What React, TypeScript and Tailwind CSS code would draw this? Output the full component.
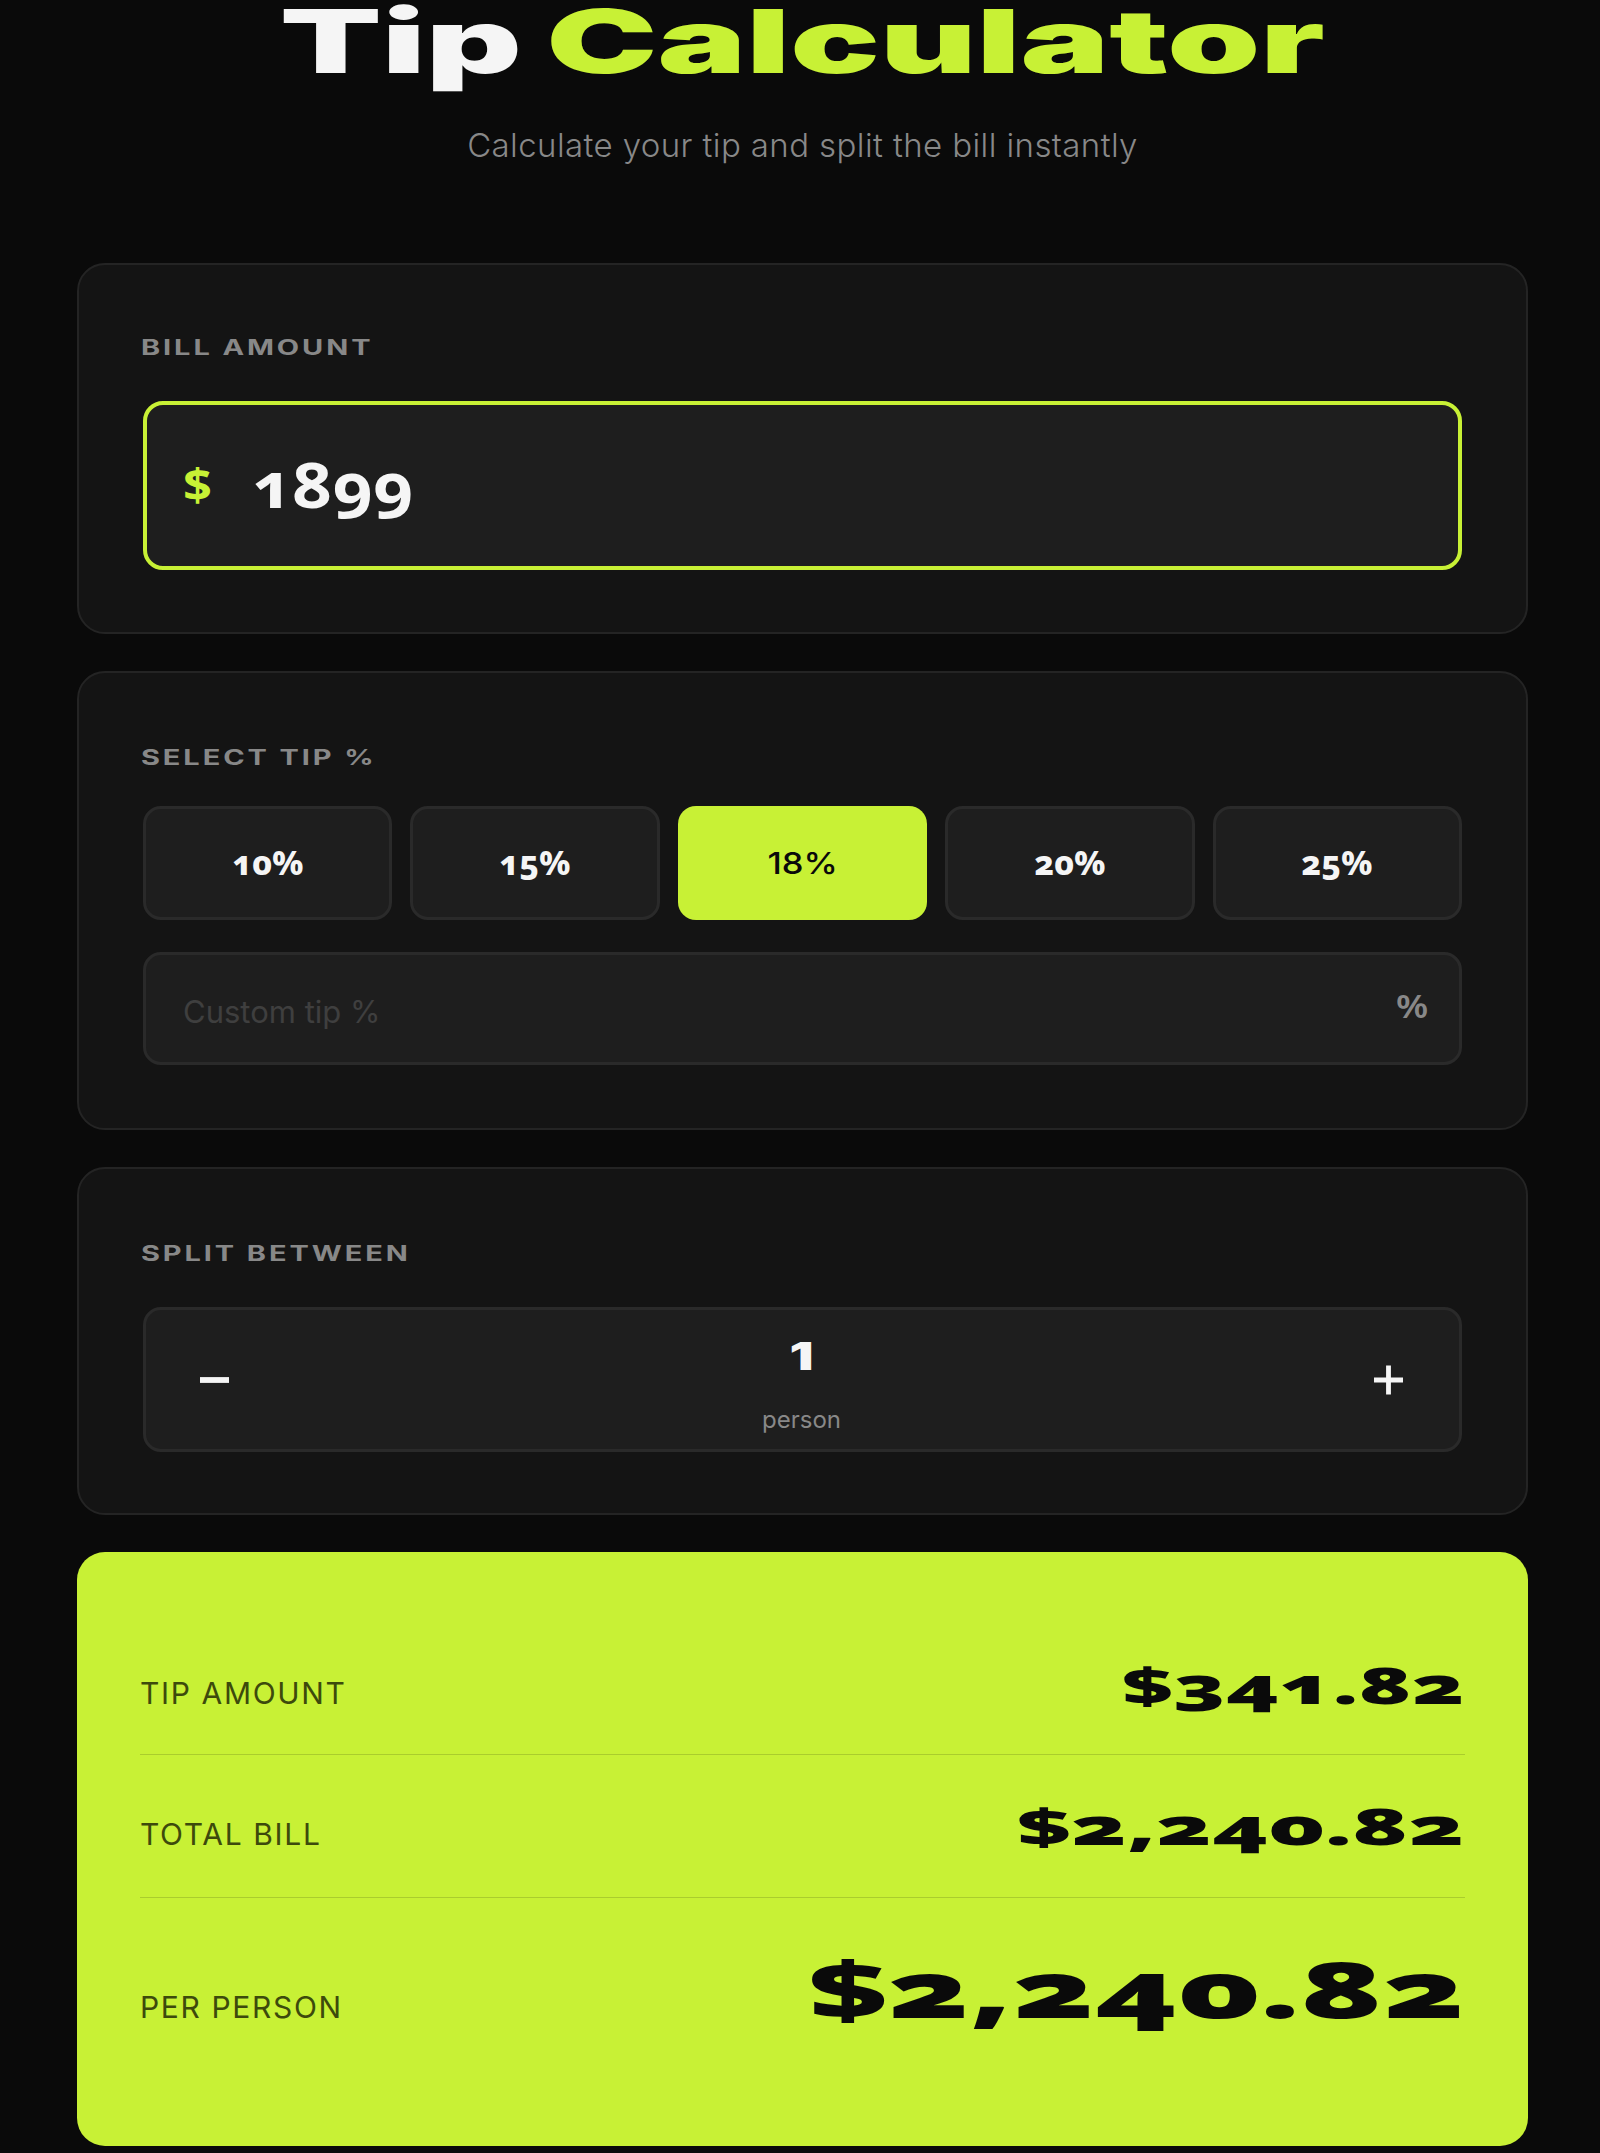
const display = "font-['Noto_Sans','Inter',sans-serif] font-black oldstyle-nums";
const body = "font-['Inter','Noto_Sans',sans-serif]";

const tips = ["10%", "15%", "18%", "20%", "25%"];

function Label({ children }: { children: string }) {
  return (
    <div className={`${body} -ml-[2px] origin-left scale-x-[1.38] text-[21px] leading-[20px] font-bold tracking-[0.1em] text-[#888888] whitespace-nowrap`}>
      {children}
    </div>
  );
}

function ResultRow({
  label,
  value,
  className,
  valueClassName,
}: {
  label: string;
  value: string;
  className: string;
  valueClassName: string;
}) {
  return (
    <div className={`flex items-baseline justify-between ${className}`}>
      <span className={`${body} text-[30px] leading-none tracking-[0.055em] text-[#3d4a0c]`}>{label}</span>
      <span className={`${display} inline-block origin-right leading-none whitespace-nowrap text-[#0a0a0a] ${valueClassName}`}>
        {value}
      </span>
    </div>
  );
}

export default function App() {
  return (
    <div className="h-[2153px] overflow-hidden bg-[#0a0a0a] pr-[72px] pl-[77px]">
      <div className="flex h-[263px] flex-col items-center">
        <h1 className={`${body} inline-block scale-x-[1.69] text-[88px] leading-[82px] font-black [word-spacing:-3px] whitespace-nowrap text-[#f5f5f5]`}>
          Tip <span className="text-[#c8f135]">Calculator</span>
        </h1>
        <p className={`${body} mt-[43px] text-[33px] leading-[40px] font-light tracking-[0.4px] text-[#888888]`}>
          Calculate your tip and split the bill instantly
        </p>
      </div>

      <div className="flex flex-col gap-[37px]">
        <section className="h-[371px] rounded-[28px] border-2 border-[#242424] bg-[#141414] px-[64px] pt-[73px]">
          <Label>BILL AMOUNT</Label>
          <div className="mt-[43px] flex h-[169px] items-center rounded-[20px] border-[4px] border-[#c8f135] bg-[#1e1e1e] pb-[4px] pl-[36px]">
            <span className={`${display} inline-block origin-left scale-x-[1.15] text-[44px] leading-none font-bold text-[#c8f135]`}>$</span>
            <span className={`${display} ml-[44px] inline-block origin-left scale-x-[1.12] text-[62px] leading-none font-bold text-[#f5f5f5]`}>1899</span>
          </div>
        </section>

        <section className="h-[459px] rounded-[28px] border-2 border-[#242424] bg-[#141414] px-[64px] pt-[75px]">
          <Label>SELECT TIP %</Label>
          <div className="mt-[38px] grid grid-cols-5 gap-[18px]">
            {tips.map((t) =>
              t === "18%" ? (
                <button key={t} className="flex h-[114px] items-center justify-center rounded-[18px] bg-[#c8f135]">
                  <span className={`${body} inline-block scale-x-[1.15] text-[30px] font-medium text-[#0a0a0a]`}>{t}</span>
                </button>
              ) : (
                <button key={t} className="flex h-[114px] items-center justify-center rounded-[18px] border-[3px] border-[#2a2a2a] bg-[#1e1e1e]">
                  <span className={`${display} inline-block scale-x-[1.02] text-[33px] font-extrabold text-[#f5f5f5]`}>{t}</span>
                </button>
              ),
            )}
          </div>
          <div className="mt-[32px] flex h-[113px] items-center justify-between rounded-[18px] border-[3px] border-[#2a2a2a] bg-[#1e1e1e] pr-[33px] pl-[37px]">
            <span className={`${body} pt-[8px] text-[31px] text-[#3f3f3f]`}>Custom tip %</span>
            <span className={`${display} inline-block scale-x-[1.15] pb-[5px] text-[32px] font-semibold text-[#888888]`}>%</span>
          </div>
        </section>

        <section className="h-[348px] rounded-[28px] border-2 border-[#242424] bg-[#141414] px-[64px] pt-[75px]">
          <Label>SPLIT BETWEEN</Label>
          <div className="mt-[43px] flex h-[145px] items-center justify-between rounded-[18px] border-[3px] border-[#2a2a2a] bg-[#1e1e1e] pr-[56px] pl-[54px]">
            <svg width="29" height="30" viewBox="0 0 30 30" aria-hidden="true">
              <rect x="0" y="12" width="30" height="6" fill="#f5f5f5" />
            </svg>
            <div className="flex flex-col items-center pt-[11px]">
              <span className={`${body} inline-block scale-x-[1.4] text-[38px] leading-[40px] font-black text-[#f5f5f5]`}>1</span>
              <span className={`${body} mt-[30px] text-[24px] leading-[28px] text-[#888888]`}>person</span>
            </div>
            <svg width="29" height="30" viewBox="0 0 30 30" aria-hidden="true">
              <path d="M12.5 0h5v12.5H30v5H17.5V30h-5V17.5H0v-5h12.5z" fill="#f5f5f5" />
            </svg>
          </div>
        </section>

        <section className="h-[594px] rounded-[28px] bg-[#c8f135] px-[63px] pt-[60px]">
          <ResultRow label="TIP AMOUNT" value="$341.82" className="h-[143px] border-b border-black/15 pt-[48px]" valueClassName="text-[50px] scale-x-[1.76]" />
          <ResultRow label="TOTAL BILL" value="$2,240.82" className="h-[143px] border-b border-black/15 pt-[46px]" valueClassName="text-[50px] scale-x-[1.86]" />
          <ResultRow label="PER PERSON" value="$2,240.82" className="pt-[51px]" valueClassName="text-[78px] scale-x-[1.75]" />
        </section>
      </div>
    </div>
  );
}
